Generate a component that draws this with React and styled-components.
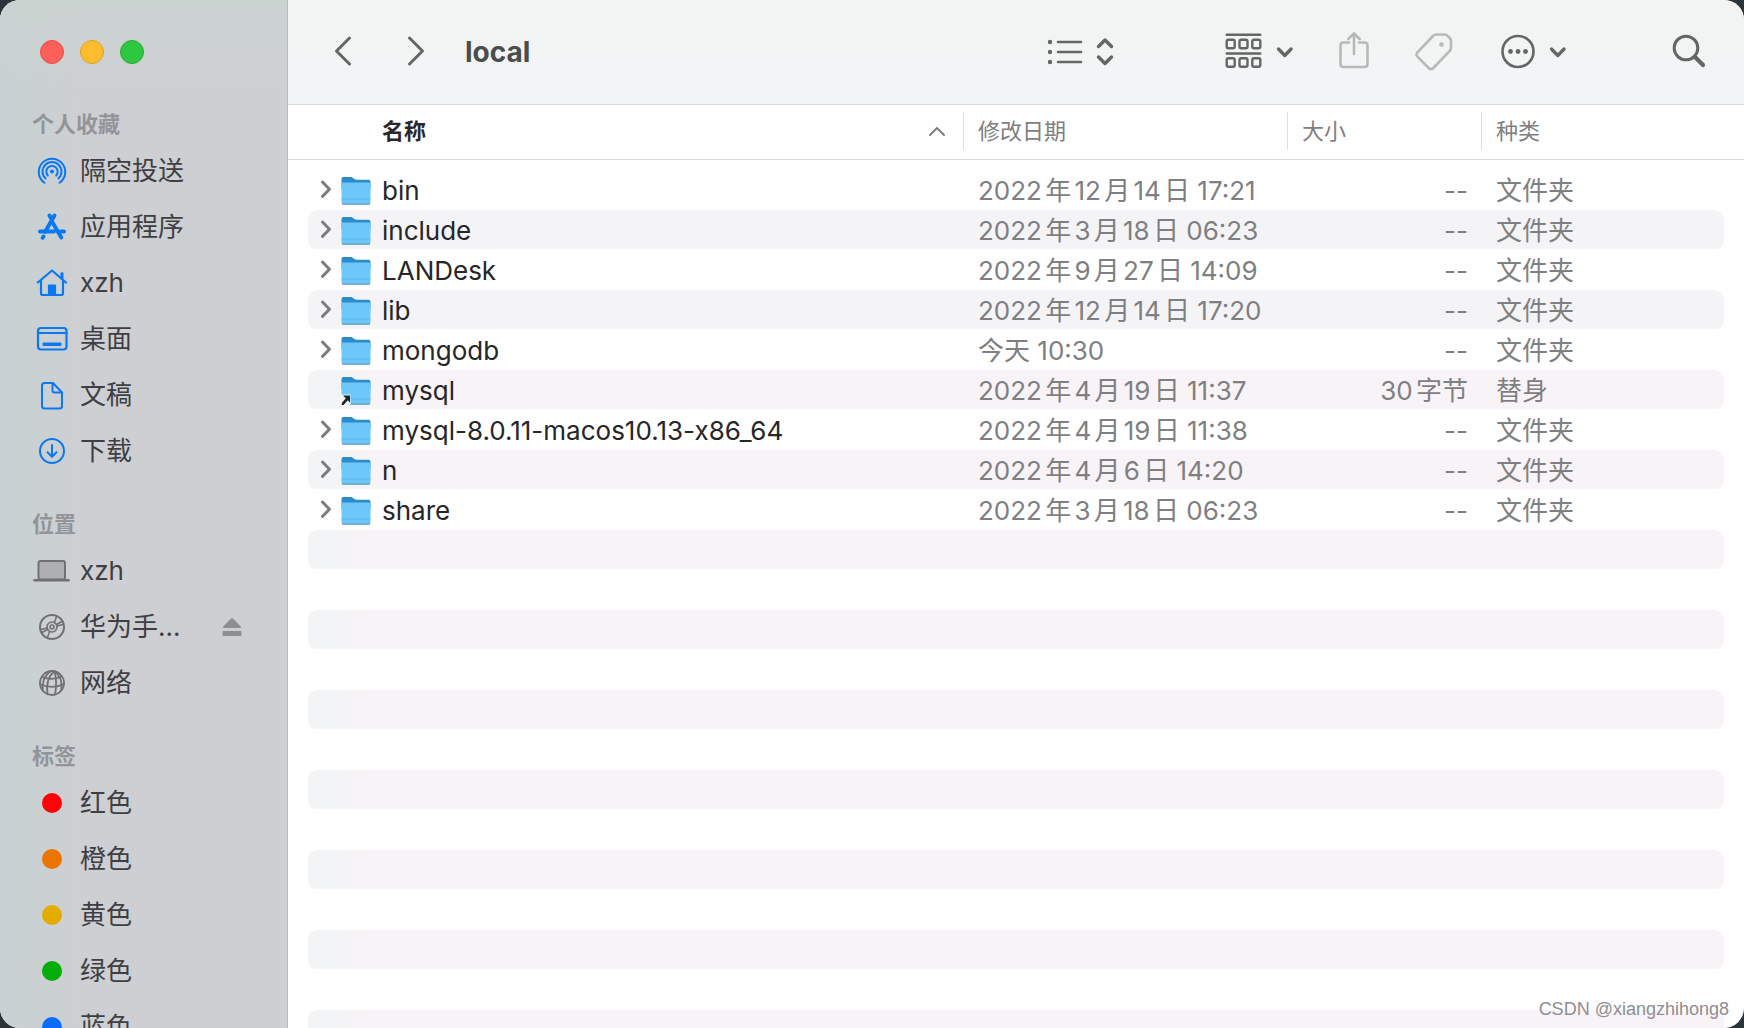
import React from 'react';
import styled, { createGlobalStyle } from 'styled-components';

const GlobalStyle = createGlobalStyle`
    * {
        box-sizing: border-box;
    }

    body {
        margin: 0;
        background-color: #2a3439;
        font-family: Inter, "Noto Sans CJK SC", sans-serif;
        font-size: 26px;
        text-autospace: normal;
        overflow: hidden;
    }
`;

const Window = styled.div`
    display: flex;
    height: 100vh;
    border-radius: 20px;
    overflow: hidden;
    position: relative;
    background-color: #fefefe;
`;

const Sidebar = styled.aside`
    flex: 0 0 288px;
    padding: 0 32px;
    overflow: hidden;
    border-right: 1px solid #b9babd;
    background:
        linear-gradient(180deg, #cbd3d1 0, #cbd3d100 90px),
        linear-gradient(90deg, #c8d1d3 0, #c9d1d2 24px, #cecfd3 80px);
`;

const Lights = styled.div`
    display: flex;
    gap: 16px;
    height: 103px;
    align-items: center;
    padding-left: 8px;
`;

const Light = styled.button`
    width: 24px;
    height: 24px;
    padding: 0;
    border-radius: 50%;
    border: 1px solid ${props => props.$edge};
    background-color: ${props => props.$color};
`;

const Section = styled.section`
    margin-bottom: 24px;
`;

const Heading = styled.h2`
    margin: 0;
    height: 40px;
    line-height: 42px;
    font-size: 22px;
    font-weight: 700;
    color: #929598;
`;

const Places = styled.ul`
    margin: 0;
    padding: 0;
    list-style: none;
`;

const Place = styled.li`
    display: flex;
    align-items: center;
    height: 56px;
`;

const PlaceLink = styled.a`
    display: flex;
    align-items: center;
    flex: 1;
    min-width: 0;
    gap: 8px;
    color: #3e3f42;
    line-height: 56px;
    text-decoration: none;
    white-space: nowrap;

    svg {
        flex: none;
    }
`;

const Dot = styled.span`
    flex: none;
    width: 20px;
    height: 20px;
    margin: 0 10px;
    border-radius: 50%;
    background-color: ${props => props.$color};
`;

const IconButton = styled.button`
    display: flex;
    align-items: center;
    gap: 10px;
    padding: 0;
    border: 0;
    background: none;
    color: ${props => (props.disabled ? '#b7b9b9' : '#646666')};
`;

const Eject = styled(IconButton)`
    margin-right: 13px;
    color: #8d8f92;
`;

const Main = styled.main`
    flex: 1;
    min-width: 0;
    display: flex;
    flex-direction: column;
`;

const Toolbar = styled.header`
    flex: none;
    display: flex;
    align-items: center;
    height: 105px;
    padding: 0 36px 0 35px;
    border-bottom: 1px solid #d9dadc;
    background: linear-gradient(180deg, #f2f4f3 40px, #f3f4f6 70px);
`;

const NavButtons = styled.nav`
    display: flex;
    gap: 33px;
`;

const Title = styled.h1`
    flex: 1;
    margin: 0 0 0 29px;
    font-size: 28px;
    line-height: 32px;
    font-weight: 700;
    color: #4b4d4d;
`;

const Views = styled.div`
    display: flex;
    gap: 106px;
    margin-right: 37px;
`;

const Actions = styled.div`
    display: flex;
    gap: 41px;
    margin-right: 98px;
`;

const FileTable = styled.table`
    display: block;
    flex: 1;
    min-height: 0;
    overflow: hidden;
    color: #7f7f81;

    thead, tbody {
        display: block;
    }
`;

const columns = 'minmax(0, 1fr) 324px 194px 243px';

const HeadRow = styled.tr`
    display: grid;
    grid-template-columns: ${columns};
    padding: 7px 20px 9px;
    margin-bottom: 10px;
    border-bottom: 1px solid #dadbdc;
`;

const HeadCell = styled.th`
    display: flex;
    align-items: center;
    justify-content: space-between;
    height: 38px;
    padding: 0 14px;
    border-left: 1px solid #dfdfe1;
    font-size: 22px;
    line-height: 38px;
    font-weight: 400;

    &:first-child {
        padding: 0 16px 0 74px;
        border-left: 0;
        font-weight: 700;
        color: #29292b;
    }
`;

const Row = styled.tr`
    display: grid;
    grid-template-columns: ${columns};
    align-items: center;
    height: 40px;
    margin: 0 20px;
    padding-top: 3px;
    border-bottom: 1px solid transparent;
    border-radius: 9px;
    background-clip: padding-box;
    line-height: 36px;

    &:nth-child(even) {
        background-color: #f4f4f6;
    }

    &:nth-child(n + 6):nth-child(even) {
        background-color: #f7f3f6;
        background-image: linear-gradient(90deg, #f3f4f5 30px, #f3f4f500 60px);
    }
`;

const Cell = styled.td`
    padding: 0 15px;
    white-space: nowrap;
    text-align: left;
`;

const SizeCell = styled(Cell)`
    padding-right: 13px;
    text-align: right;
`;

const NameCell = styled.td`
    display: flex;
    align-items: center;
    padding: 0 0 0 6px;
    color: #262628;
    white-space: nowrap;
`;

const Toggle = styled.button`
    display: flex;
    width: 26px;
    padding: 0;
    border: 0;
    background: none;
    color: #7c7c7e;
    visibility: ${props => (props.$hidden ? 'hidden' : 'visible')};
`;

const FileName = styled.span`
    margin-left: 10px;
`;

const Watermark = styled.div`
    position: absolute;
    right: 15px;
    bottom: 7px;
    font: 18px/24px "Liberation Sans", sans-serif;
    color: #8e8e90;
    text-shadow: -1px -1px 0 #ffffff;
`;

const Icon = ({ size = 40, width = size, stroke = 3, children }) => (
    <svg
        width={width}
        height={size}
        viewBox={`0 0 ${width} ${size}`}
        fill="none"
        stroke="currentColor"
        strokeWidth={stroke}
        strokeLinecap="round"
        strokeLinejoin="round"
        aria-hidden="true"
    >
        {children}
    </svg>
);

const ChevronDown = () => (
    <Icon width={24} stroke={3.3}><path d="M5.5 17l6.3 6.500 6.300-6.500" /></Icon>
);

const blue = '#0a78f0';
const gray = '#707174';

const AirDropIcon = () => (
    <Icon stroke={2}>
        <g stroke={blue}>
            <path d="M12.500 31.800a13.200 13.200 0 1 1 15 0" />
            <path d="M13.500 27.500a9.500 9.500 0 1 1 13 0" />
            <path d="M15.800 24.500a5.700 5.700 0 1 1 8.400 0" />
            <circle cx="20" cy="20.500" r="2" fill={blue} stroke="none" />
        </g>
    </Icon>
);

const AppsIcon = () => (
    <Icon stroke={4}>
        <g stroke={blue}>
            <path d="M17.500 8.500l2.200 3.800M22.500 8.500l-9.300 16.200" />
            <path d="M20.500 15.500l8.800 15" />
            <path d="M8 24.500h14M28.500 24.500H32" />
            <path d="M11.500 29.500l-.8 1.300" />
        </g>
    </Icon>
);

const HomeIcon = () => (
    <Icon stroke={2.2}>
        <g stroke={blue}>
            <path d="M5.800 19.500L20 7.500l14 12" />
            <path d="M9 18v12.300q0 1.700 1.700 1.700h18.600q1.700 0 1.700-1.700V18" />
            <path d="M30 10.500v5" strokeWidth="3" />
            <path d="M17 32v-9.500h6V32z" fill={blue} />
        </g>
    </Icon>
);

const DesktopIcon = () => (
    <Icon stroke={2.2}>
        <g stroke={blue}>
            <rect x="6" y="9" width="28.500" height="21.500" rx="3" />
            <path d="M6 14h28.500" />
            <rect x="10.500" y="23.500" width="19" height="3.600" rx="1" fill={blue} stroke="none" />
        </g>
    </Icon>
);

const DocumentIcon = () => (
    <Icon stroke={2}>
        <g stroke={blue}>
            <path d="M21 8h-8.500Q10 8 10 10.500v20.500Q10 33.500 12.500 33.500h15q2.500 0 2.500-2.500V17.500z" />
            <path d="M20.500 8v7.500q0 2 2 2H30" />
        </g>
    </Icon>
);

const DownloadIcon = () => (
    <Icon stroke={2}>
        <g stroke={blue}>
            <circle cx="20" cy="20" r="12" />
            <path d="M20 14v11.500M15.500 21.300l4.500 4.500 4.500-4.500" />
        </g>
    </Icon>
);

const LaptopIcon = () => (
    <Icon stroke={2}>
        <g stroke={gray}>
            <rect x="6.500" y="10" width="26.500" height="18.500" rx="2" fill="#aeafb2" />
            <path d="M2.500 29.300h34" strokeWidth="2.600" />
        </g>
    </Icon>
);

const DiscIcon = () => (
    <Icon stroke={2}>
        <g stroke={gray}>
            <circle cx="20" cy="20" r="12" />
            <circle cx="20" cy="20" r="5" strokeWidth="1.600" />
            <circle cx="20" cy="20" r="2" strokeWidth="1.600" />
            <path d="M22.500 15.500l2-6M24.500 17.500l5.500-3M17.500 24.500l-2 6M15.500 22.500L10 25.500" strokeWidth="1.500" />
            <path d="M25 19l6-1.500M15 21l-6 1.500" strokeWidth="1.300" />
        </g>
    </Icon>
);

const NetworkIcon = () => (
    <Icon stroke={1.8}>
        <g stroke={gray}>
            <circle cx="20" cy="20" r="12" />
            <path d="M22.500 8.300Q13.500 15 15.500 31.300" />
            <path d="M18.500 8.300Q9.500 14.500 10.800 27.500" />
            <path d="M22.500 8.300Q25.500 19 23 31.600" />
            <path d="M22.500 8.300Q31 14.500 29.300 27.400" />
            <path d="M10 14q11 4 19.800-.8" />
            <path d="M8.500 21.500q12.500 5 23.300-.5" />
        </g>
    </Icon>
);

const FolderIcon = ({ alias }) => (
    <svg width="32" height="32" viewBox="0 0 32 32" aria-hidden="true">
        <path d="M2 29.500h28" stroke="#8b9ba8" strokeWidth="1" opacity=".6" />
        <path d="M1.500 4q0-2 2-2h7.500q1 0 2 .9l1.400 1.200q.8.700 2 .7h12.100q2 0 2 2V14h-29z" fill="#2a8ccb" />
        <path d="M1.500 8.500q0-1 1-1h27q1 0 1 1V27q0 2-2 2h-25q-2 0-2-2z" fill="#6dc8f9" />
        <path d="M1.500 24h29" stroke="#58b5e6" strokeWidth="1" />
        <path d="M2.200 28.200q.5.800 1.500.8h24.600q1 0 1.500-.8" fill="none" stroke="#4a9dc9" strokeWidth="1.200" />
        {alias && (
            <g>
                <path d="M1 19.500h9.500v10.500H1z" fill="#f0f3f5" />
                <path d="M3 20.500h7v7l-2.200-2.200L3.500 30H1.800v-2l4-4.700z" fill="#1e2226" />
            </g>
        )}
    </svg>
);

const favorites = [
    { name: '隔空投送', icon: <AirDropIcon /> },
    { name: '应用程序', icon: <AppsIcon /> },
    { name: 'xzh', icon: <HomeIcon /> },
    { name: '桌面', icon: <DesktopIcon /> },
    { name: '文稿', icon: <DocumentIcon /> },
    { name: '下载', icon: <DownloadIcon /> },
];

const locations = [
    { name: 'xzh', icon: <LaptopIcon /> },
    { name: '华为手…', icon: <DiscIcon />, eject: true },
    { name: '网络', icon: <NetworkIcon /> },
];

const tags = [
    { name: '红色', icon: <Dot $color="#fd0207" /> },
    { name: '橙色', icon: <Dot $color="#ec7401" /> },
    { name: '黄色', icon: <Dot $color="#e3ac01" /> },
    { name: '绿色', icon: <Dot $color="#04ae09" /> },
    { name: '蓝色', icon: <Dot $color="#0a6cf9" /> },
];

const files = [
    { name: 'bin', date: '2022年12月14日 17:21' },
    { name: 'include', date: '2022年3月18日 06:23' },
    { name: 'LANDesk', date: '2022年9月27日 14:09' },
    { name: 'lib', date: '2022年12月14日 17:20' },
    { name: 'mongodb', date: '今天 10:30' },
    { name: 'mysql', date: '2022年4月19日 11:37', size: '30字节', kind: '替身', alias: true },
    { name: 'mysql-8.0.11-macos10.13-x86_64', date: '2022年4月19日 11:38' },
    { name: 'n', date: '2022年4月6日 14:20' },
    { name: 'share', date: '2022年3月18日 06:23' },
];

// blank striped rows that fill the rest of the window
const blankRows = Array.from({ length: 30 });

const PlaceSection = ({ title, items }) => (
    <Section>
        <Heading>{title}</Heading>
        <Places>
            {items.map((item) => (
                <Place key={item.name}>
                    <PlaceLink href="#">
                        {item.icon}
                        {item.name}
                    </PlaceLink>
                    {item.eject && (
                        <Eject aria-label="推出">
                            <svg width="20" height="20" viewBox="0 0 20 20" fill="currentColor" aria-hidden="true">
                                <path d="M9 1.500q1-1 2 0l7.800 8q1 1.500-.8 1.500H2q-1.800 0-.8-1.500z" />
                                <rect x="0.500" y="14" width="19" height="5" rx="1" />
                            </svg>
                        </Eject>
                    )}
                </Place>
            ))}
        </Places>
    </Section>
);

const App = () => {
    return (
        <>
            <GlobalStyle />
            <Window>
                <Sidebar>
                    <Lights>
                        <Light $color="#fe5f58" $edge="#e2514a" aria-label="关闭" />
                        <Light $color="#febd2e" $edge="#dfa023" aria-label="最小化" />
                        <Light $color="#2ec840" $edge="#27a935" aria-label="缩放" />
                    </Lights>
                    <PlaceSection title="个人收藏" items={favorites} />
                    <PlaceSection title="位置" items={locations} />
                    <PlaceSection title="标签" items={tags} />
                </Sidebar>
                <Main>
                    <Toolbar>
                        <NavButtons>
                            <IconButton aria-label="后退">
                                <Icon><path d="M26.500 6L13.500 19l13 13" /></Icon>
                            </IconButton>
                            <IconButton aria-label="前进">
                                <Icon><path d="M13.500 6l13 13-13 13" /></Icon>
                            </IconButton>
                        </NavButtons>
                        <Title>local</Title>
                        <Views>
                            <IconButton aria-label="列表显示">
                                <Icon stroke={2.6}>
                                    <path d="M15 10h23M15 20h23M15 30h23" />
                                    <g fill="currentColor" stroke="none">
                                        <circle cx="7" cy="10" r="2.200" />
                                        <circle cx="7" cy="20" r="2.200" />
                                        <circle cx="7" cy="30" r="2.200" />
                                    </g>
                                </Icon>
                                <Icon width={24} stroke={3.4}>
                                    <path d="M5.500 14.500L12 8l6.500 6.500M5.500 25l6.500 6.500 6.500-6.500" />
                                </Icon>
                            </IconButton>
                            <IconButton aria-label="群组">
                                <Icon stroke={2.4}>
                                    <path d="M3.700 2.800h33.600M3.700 21.500h33.600" />
                                    {[7.7, 26.3].map((y) => [3.7, 16.5, 29.3].map((x) => (
                                        <rect key={`${x}-${y}`} x={x} y={y} width="8" height="8.500" rx="1.800" />
                                    )))}
                                </Icon>
                                <ChevronDown />
                            </IconButton>
                        </Views>
                        <Actions>
                            <IconButton disabled aria-label="共享">
                                <Icon stroke={2.6}>
                                    <path d="M15 10.500H9.500Q6.500 10.500 6.500 13.500v18.500q0 3 3 3h21q3 0 3-3V13.500q0-3-3-3H25" />
                                    <path d="M20 22V1.500M14.300 7L20 1.300 25.700 7" />
                                </Icon>
                            </IconButton>
                            <IconButton disabled aria-label="标签">
                                <Icon stroke={2.6}>
                                    <path d="M21.300 2.500h8.200q1.700 0 3 1.300l2.200 2.200q1.300 1.300 1.300 3v6.500q0 2.200-1.500 3.700L18.300 36q-2.300 2.300-4.600 0L2.500 24.700q-2-2.200 0-4.400L18 4q1.400-1.500 3.300-1.500z" />
                                    <circle cx="26.500" cy="12.500" r="2.300" fill="currentColor" stroke="none" />
                                </Icon>
                            </IconButton>
                            <IconButton aria-label="更多">
                                <Icon stroke={2.6}>
                                    <circle cx="22" cy="19.500" r="15.500" />
                                    <g fill="currentColor" stroke="none">
                                        <circle cx="14.500" cy="19.500" r="2.400" />
                                        <circle cx="22" cy="19.500" r="2.400" />
                                        <circle cx="29.500" cy="19.500" r="2.400" />
                                    </g>
                                </Icon>
                                <ChevronDown />
                            </IconButton>
                        </Actions>
                        <IconButton aria-label="搜索">
                            <Icon>
                                <circle cx="18" cy="16" r="11.800" />
                                <path d="M27 25l8 8" strokeWidth="4.200" />
                            </Icon>
                        </IconButton>
                    </Toolbar>
                    <FileTable>
                        <thead>
                            <HeadRow>
                                <HeadCell scope="col">
                                    名称
                                    <Icon size={20} stroke={2}><path d="M3 14l7-7 7 7" stroke="#7f7f81" /></Icon>
                                </HeadCell>
                                <HeadCell scope="col">修改日期</HeadCell>
                                <HeadCell scope="col">大小</HeadCell>
                                <HeadCell scope="col">种类</HeadCell>
                            </HeadRow>
                        </thead>
                        <tbody>
                            {files.map((file) => (
                                <Row key={file.name}>
                                    <NameCell>
                                        <Toggle $hidden={file.alias} aria-label="展开">
                                            <Icon size={24}><path d="M8.500 3l7 7.200-7 7.200" /></Icon>
                                        </Toggle>
                                        <FolderIcon alias={file.alias} />
                                        <FileName>{file.name}</FileName>
                                    </NameCell>
                                    <Cell>{file.date}</Cell>
                                    <SizeCell>{file.size || '--'}</SizeCell>
                                    <Cell>{file.kind || '文件夹'}</Cell>
                                </Row>
                            ))}
                            {blankRows.map((_, index) => (
                                <Row key={index} aria-hidden="true" />
                            ))}
                        </tbody>
                    </FileTable>
                </Main>
                <Watermark>CSDN @xiangzhihong8</Watermark>
            </Window>
        </>
    );
}

export default App;
